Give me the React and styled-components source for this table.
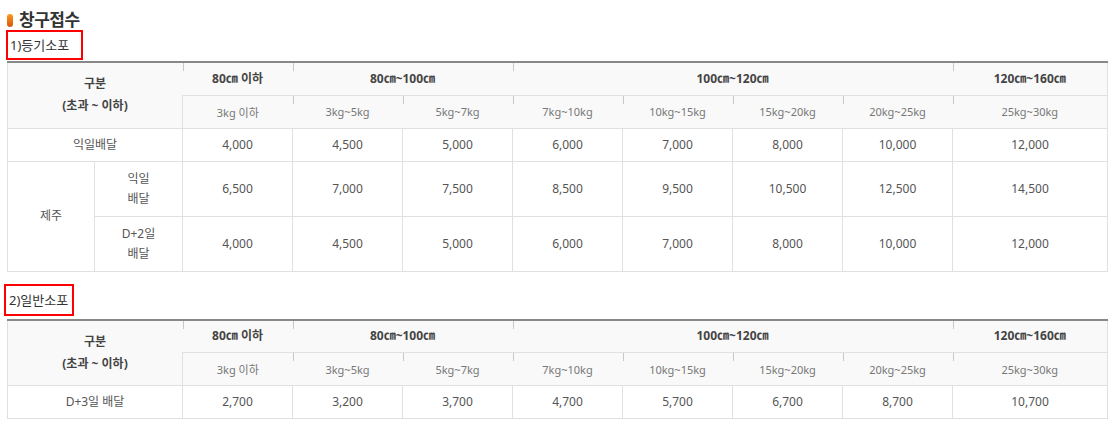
import React from "react";
import styled, { createGlobalStyle } from "styled-components";

const GlobalStyle = createGlobalStyle`
  html, body {
    margin: 0;
    padding: 0;
    background: #fff;
  }
  body {
    font-family: "Noto Sans", "Noto Sans CJK KR", sans-serif;
    color: #555;
  }
`;

const sizes = ["80㎝ 이하", "80㎝~100㎝", "100㎝~120㎝", "120㎝~160㎝"];
const sizeSpans = [1, 2, 4, 1];
const weights = [
  "3kg 이하",
  "3kg~5kg",
  "5kg~7kg",
  "7kg~10kg",
  "10kg~15kg",
  "15kg~20kg",
  "20kg~25kg",
  "25kg~30kg"
];

const registered = {
  next: ["4,000", "4,500", "5,000", "6,000", "7,000", "8,000", "10,000", "12,000"],
  jejuNext: ["6,500", "7,000", "7,500", "8,500", "9,500", "10,500", "12,500", "14,500"],
  jejuD2: ["4,000", "4,500", "5,000", "6,000", "7,000", "8,000", "10,000", "12,000"]
};

const normal = ["2,700", "3,200", "3,700", "4,700", "5,700", "6,700", "8,700", "10,700"];

export default class extends React.Component {
  renderHead() {
    return (
      <>
        <colgroup>
          <col style={{ width: 87 }} />
          <col style={{ width: 88 }} />
          {weights.map((w, i) => (
            <col key={w} style={{ width: i === weights.length - 1 ? 155 : 110 }} />
          ))}
        </colgroup>
        <thead>
          <HeadRow>
            <Th rowSpan={2} colSpan={2} first>
              구분
              <br />
              (초과 ~ 이하)
            </Th>
            {sizes.map((s, i) => (
              <Th key={s} colSpan={sizeSpans[i]} tick last={i === sizes.length - 1}>
                {s}
              </Th>
            ))}
          </HeadRow>
          <HeadRow>
            {weights.map((w, i) => (
              <SubTh
                key={w}
                tick={i > 0}
                full={i === 0}
                last={i === weights.length - 1}
              >
                {w}
              </SubTh>
            ))}
          </HeadRow>
        </thead>
      </>
    );
  }

  render() {
    return (
      <Page>
        <GlobalStyle />
        <Title>
          <Pill />
          창구접수
        </Title>
        <Label>1)등기소포</Label>
        <Table>
          {this.renderHead()}
          <tbody>
            <Row>
              <Td colSpan={2}>익일배달</Td>
              {registered.next.map((v, i) => (
                <Td key={i}>{v}</Td>
              ))}
            </Row>
            <TallRow>
              <Td rowSpan={2}>제주</Td>
              <Td>
                익일
                <br />
                배달
              </Td>
              {registered.jejuNext.map((v, i) => (
                <Td key={i}>{v}</Td>
              ))}
            </TallRow>
            <TallRow>
              <Td>
                D+2일
                <br />
                배달
              </Td>
              {registered.jejuD2.map((v, i) => (
                <Td key={i}>{v}</Td>
              ))}
            </TallRow>
          </tbody>
        </Table>

        <Label second>2)일반소포</Label>
        <Table second>
          {this.renderHead()}
          <tbody>
            <Row>
              <Td colSpan={2}>D+3일 배달</Td>
              {normal.map((v, i) => (
                <Td key={i}>{v}</Td>
              ))}
            </Row>
          </tbody>
        </Table>
      </Page>
    );
  }
}

const Page = styled.div`
  padding: 7px 6px 0 7px;
`;

const Title = styled.h3`
  display: flex;
  align-items: center;
  gap: 6px;
  margin: 0;
  height: 23px;
  font-size: 17px;
  font-weight: 700;
  color: #333;
  letter-spacing: -0.5px;
`;

const Pill = styled.span`
  display: inline-block;
  width: 6px;
  height: 13px;
  margin-top: 4px;
  border-radius: 3px;
  background: linear-gradient(#ff9a1a, #d9540b);
`;

const Label = styled.div`
  display: inline-block;
  box-sizing: border-box;
  height: ${p => (p.second ? "32px" : "30px")};
  margin: ${p => (p.second ? "12px 0 0 -3px" : "0 0 0 -1px")};
  padding: ${p => (p.second ? "0 4px 0 3px" : "0 12px 0 2px")};
  border: 2px solid #f00;
  font-size: 13px;
  line-height: ${p => (p.second ? "28px" : "26px")};
  color: #333;
`;

const Table = styled.table`
  display: table;
  width: 1100px;
  table-layout: fixed;
  border-collapse: collapse;
  margin-top: ${p => (p.second ? "3px" : "1px")};
  border-top: 2px solid #888;
  font-size: 12px;
  text-align: center;
`;

const HeadRow = styled.tr`
  height: 33px;
`;

const Row = styled.tr`
  height: 33px;
`;

const TallRow = styled.tr`
  height: 55px;
`;

const tickBg = "linear-gradient(#c8c8c8, #c8c8c8) no-repeat left top / 1px 8px";

const Th = styled.th`
  padding: 0;
  background: ${p => (p.tick ? tickBg + ", #f9f9f9" : "#f9f9f9")};
  border-bottom: 1px solid #e0e0e0;
  border-left: ${p => (p.first ? "1px solid #e0e0e0" : "none")};
  border-right: ${p => (p.last ? "1px solid #e0e0e0" : "none")};
  font-weight: 700;
  font-size: 12px;
  line-height: 22px;
  color: #444;
  vertical-align: middle;
`;

const SubTh = styled.th`
  padding: 0;
  background: ${p => (p.tick ? tickBg + ", #f9f9f9" : "#f9f9f9")};
  border-bottom: 1px solid #e0e0e0;
  border-left: ${p => (p.full ? "1px solid #e0e0e0" : "none")};
  border-right: ${p => (p.last ? "1px solid #e0e0e0" : "none")};
  font-weight: 400;
  font-size: 11px;
  color: #777;
  vertical-align: middle;
`;

const Td = styled.td`
  padding: 0;
  border: 1px solid #e0e0e0;
  font-size: 12px;
  line-height: 20px;
  color: #555;
  vertical-align: middle;
`;
